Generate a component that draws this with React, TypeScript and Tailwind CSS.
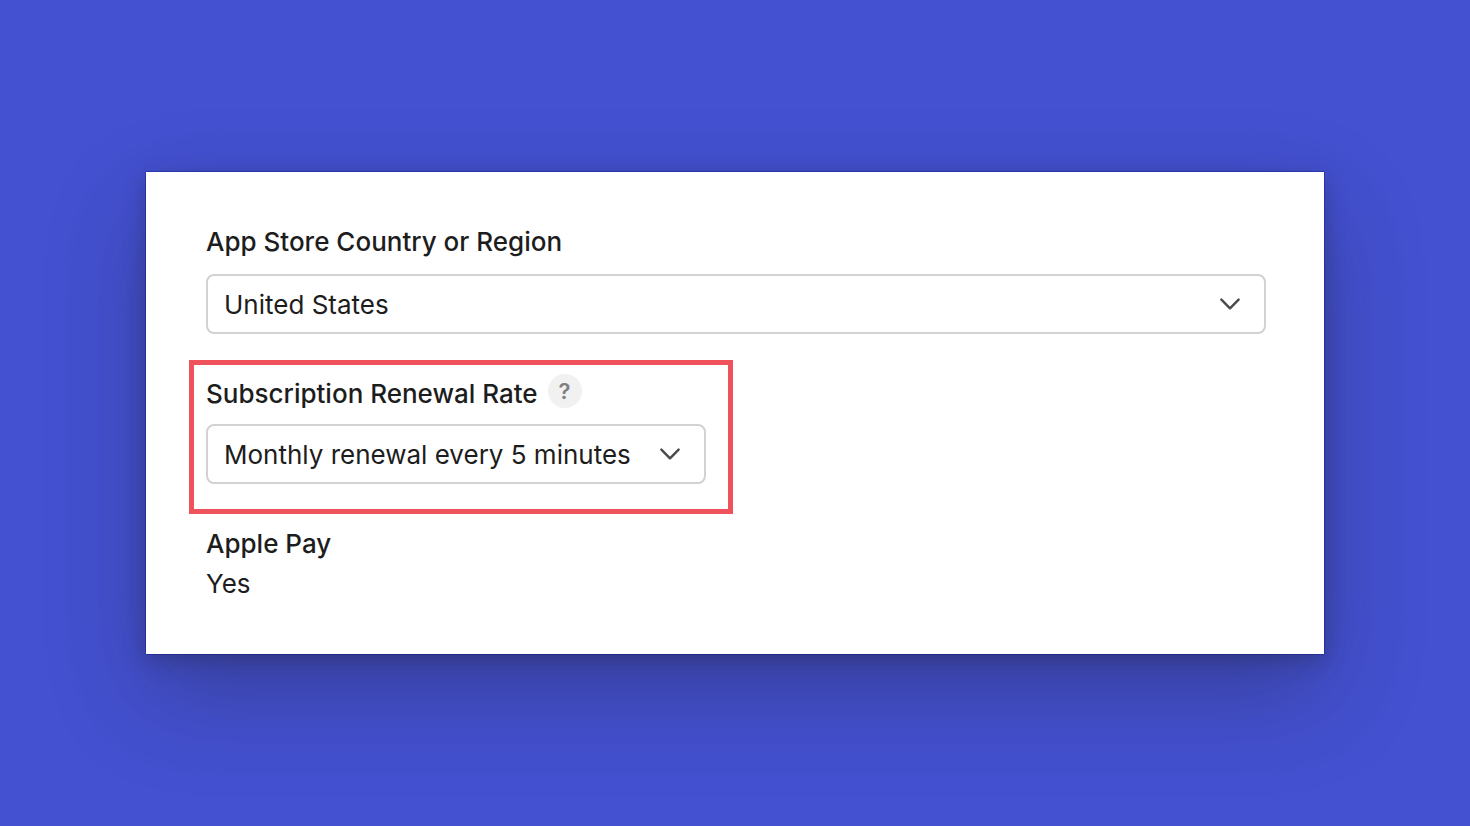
import type { ReactNode } from "react";

type SelectFieldProps = {
  id: string;
  options: string[];
  className?: string;
};

function SelectField({ id, options, className = "" }: SelectFieldProps) {
  return (
    <div className={`relative ${className}`}>
      <select
        id={id}
        className="block h-[60px] w-full appearance-none rounded-lg border-2 border-[#d2d2d2] bg-white pr-14 pl-4 text-[26px] text-[#1d1d1d] outline-none focus-visible:border-blue-500"
      >
        {options.map((option) => (
          <option key={option}>{option}</option>
        ))}
      </select>
      <svg
        aria-hidden="true"
        viewBox="0 0 20 12"
        className="pointer-events-none absolute top-6 right-[26px] h-3 w-5"
        fill="none"
        stroke="#4a4a4a"
        strokeWidth="2.4"
        strokeLinecap="round"
        strokeLinejoin="round"
      >
        <path d="M1.4 1.6 10 10.3l8.6-8.7" />
      </svg>
    </div>
  );
}

function FieldLabel({ htmlFor, children }: { htmlFor: string; children: ReactNode }) {
  return (
    <label htmlFor={htmlFor} className="block leading-10 font-medium">
      {children}
    </label>
  );
}

export default function App() {
  return (
    <main className="flex min-h-screen flex-col justify-center bg-[#4451d1] px-[146px] font-['Inter',sans-serif] text-[26px] text-[#1d1d1d]">
      <section className="bg-white py-[50px] pr-[58px] pl-[60px] shadow-[0_0_1px_#00117a,0_0_1px_#00117a,0_6px_20px_rgba(30,30,50,0.3),0_40px_90px_rgba(30,30,50,0.32)]">
        <FieldLabel htmlFor="country">App Store Country or Region</FieldLabel>
        <SelectField id="country" options={["United States"]} className="mt-3" />

        <div className="mt-[26px] -ml-[17px] w-[544px] max-w-full border-5 border-[#f0525c] pt-[9px] pr-[22px] pb-[25px] pl-3">
          <div className="flex items-start gap-[10px]">
            <FieldLabel htmlFor="renewal">Subscription Renewal Rate</FieldLabel>
            <button
              type="button"
              aria-label="Help"
              className="flex size-[34px] items-center justify-center rounded-full bg-[#f1f1f1] text-[22px] font-semibold text-[#808080]"
            >
              ?
            </button>
          </div>
          <SelectField id="renewal" options={["Monthly renewal every 5 minutes"]} className="mt-[10px]" />
        </div>

        <dl className="mt-[10px] leading-10">
          <dt className="font-medium">Apple Pay</dt>
          <dd>Yes</dd>
        </dl>
      </section>
    </main>
  );
}
